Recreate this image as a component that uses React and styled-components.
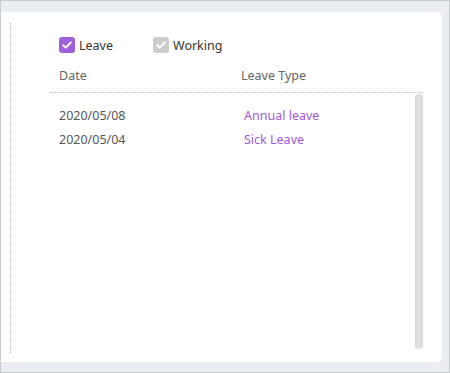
import React from "react";
import styled, { createGlobalStyle } from "styled-components";

const GlobalStyle = createGlobalStyle`
  html, body {
    margin: 0;
    padding: 0;
    background: #eaedf2;
  }
  body {
    font-family: "Noto Sans", "Open Sans", Arial, sans-serif;
  }
`;

const Frame = styled.div`
  box-sizing: border-box;
  width: 450px;
  height: 373px;
  border: 1px solid #c8cbd0;
  background: #eaedf2;
  padding: 11px 7px 10px 0;
  display: flex;
`;

const Panel = styled.div`
  flex: 1;
  display: flex;
  background: #ffffff;
  border-radius: 0 5px 5px 0;
  overflow: hidden;
`;

const Gutter = styled.div`
  width: 9px;
  margin: 11px 0 9px;
  border-right: 1px dotted #b9b9b9;
`;

const Content = styled.div`
  flex: 1;
  display: flex;
  flex-direction: column;
  padding: 24px 18px 11px 40px;
`;

const Legend = styled.div`
  display: flex;
  gap: 40px;
  padding-left: 8px;
  height: 18px;
  align-items: center;
`;

const LegendItem = styled.label`
  display: flex;
  align-items: center;
  gap: 4px;
  font-size: 12.5px;
  color: #333;
`;

const Box = styled.span`
  width: 16px;
  height: 16px;
  border-radius: 3px;
  background: ${(p) => (p.$on ? "#9f60dc" : "#cccccc")};
  display: flex;
  align-items: center;
  justify-content: center;
`;

const HeaderRow = styled.div`
  display: grid;
  grid-template-columns: 182px 1fr;
  padding: 0 8px;
  margin-top: 12px;
  height: 18px;
  align-items: center;
  font-size: 12.5px;
  color: #666;
`;

const Divider = styled.div`
  margin-top: 8px;
  border-top: 1px dotted #b9b9b9;
  margin-right: 2px;
`;

const Body = styled.div`
  flex: 1;
  display: flex;
  position: relative;
`;

const Rows = styled.div`
  flex: 1;
  padding-top: 10px;
`;

const Row = styled.div`
  display: grid;
  grid-template-columns: 185px 1fr;
  padding: 0 8px;
  height: 24px;
  align-items: center;
  font-size: 12.5px;
`;

const DateCell = styled.span`
  color: #555;
`;

const TypeCell = styled.span`
  color: #a15ad9;
`;

const Scrollbar = styled.div`
  width: 8px;
  margin: 1px 1px 2px 0;
  border-radius: 4px;
  background: linear-gradient(to right, #d6d6d6, #e4e4e4 50%, #d6d6d6);
`;

const Check = () => (
  <svg width="12" height="12" viewBox="0 0 12 12">
    <path d="M2.2 6.2 L4.8 8.6 L9.8 3.4" fill="none" stroke="#fff" strokeWidth="2" strokeLinecap="round" strokeLinejoin="round" />
  </svg>
);

const rows = [
  { date: "2020/05/08", type: "Annual leave" },
  { date: "2020/05/04", type: "Sick Leave" },
];

export default function App() {
  return (
    <>
      <GlobalStyle />
      <Frame>
        <Panel>
          <Gutter />
          <Content>
            <Legend>
              <LegendItem>
                <Box $on>
                  <Check />
                </Box>
                Leave
              </LegendItem>
              <LegendItem>
                <Box>
                  <Check />
                </Box>
                Working
              </LegendItem>
            </Legend>
            <HeaderRow>
              <span>Date</span>
              <span>Leave Type</span>
            </HeaderRow>
            <Divider />
            <Body>
              <Rows>
                {rows.map((r) => (
                  <Row key={r.date}>
                    <DateCell>{r.date}</DateCell>
                    <TypeCell>{r.type}</TypeCell>
                  </Row>
                ))}
              </Rows>
              <Scrollbar />
            </Body>
          </Content>
        </Panel>
      </Frame>
    </>
  );
}
